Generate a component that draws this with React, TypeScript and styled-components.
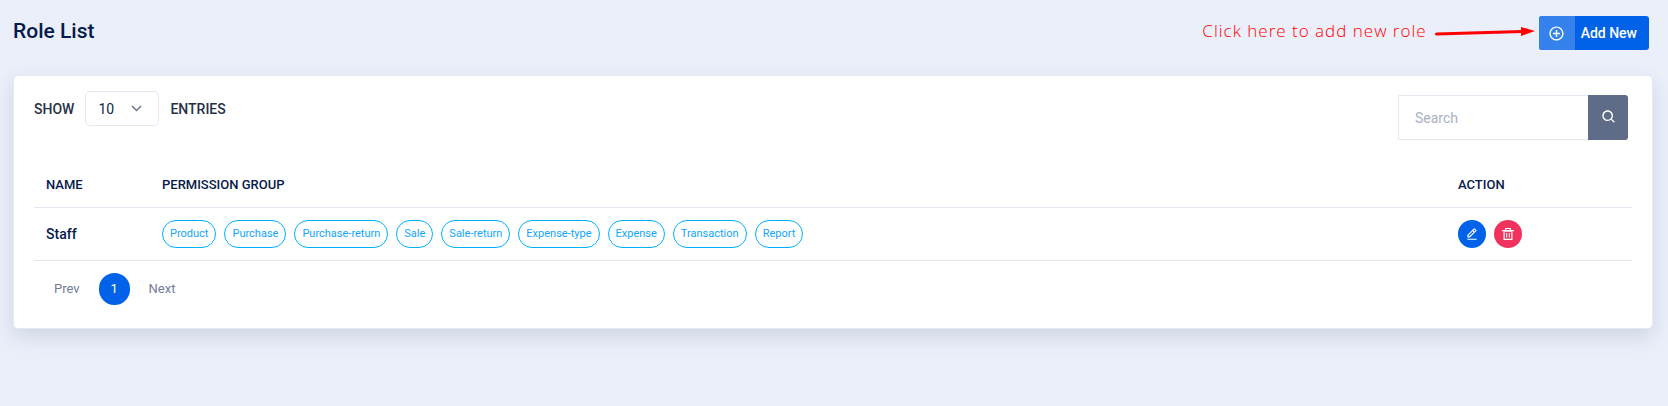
import React from 'react';
import styled, { createGlobalStyle } from 'styled-components';
import { BiPlusCircle, BiSearch, BiEditAlt } from 'react-icons/bi';

const GlobalStyle = createGlobalStyle`
  *, *::before, *::after { box-sizing: border-box; }
  body {
    margin: 0;
    background: #ebeffa;
    color: #061a4b;
    font-family: Roboto, "Liberation Sans", sans-serif;
    font-size: 14px;
    line-height: 20px;
  }
  button, input, select { font: inherit; }
`;

const Page = styled.main`
  padding: 16px 15px 60px 13px;
`;

const PageHeader = styled.header`
  display: flex;
  justify-content: space-between;
  align-items: center;
  height: 34px;
  margin-bottom: 25px;
  padding-right: 4px;
`;

const Title = styled.h1`
  margin: 0;
  padding-bottom: 4px;
  font-size: 21px;
  line-height: 30px;
  font-weight: 500;
`;

const HeaderActions = styled.div`
  display: flex;
  align-items: center;
`;

const Hint = styled.p`
  margin: 0;
  padding-bottom: 4px;
  color: #ff0000;
  font-family: "Open Sans", "Noto Sans", sans-serif;
  font-weight: 300;
  font-size: 17px;
  line-height: 30px;
  letter-spacing: 1px;
`;

const Arrow = styled.svg`
  display: block;
  margin: 0 4px 4px 7px;
`;

const AddButton = styled.button`
  display: flex;
  height: 34px;
  padding: 0;
  border: 0;
  border-radius: 3px;
  overflow: hidden;
  background: #0062e8;
  color: #fff;
  cursor: pointer;
`;

const AddIcon = styled.span`
  display: grid;
  place-items: center;
  width: 36px;
  height: 34px;
  background: #3582ed;
`;

const AddLabel = styled.span`
  padding: 0 12px 0 6px;
  line-height: 34px;
  font-weight: 500;
`;

const Card = styled.section`
  padding: 15px 20px 23px;
  border: 1px solid #e6e9f3;
  border-radius: 5px;
  background: #fff;
  box-shadow: 0 8px 20px rgba(40, 55, 90, 0.14);
`;

const Toolbar = styled.div`
  display: flex;
  justify-content: space-between;
  align-items: flex-start;
  padding-right: 4px;
`;

const LengthLabel = styled.label`
  display: flex;
  align-items: center;
  gap: 11px;
  color: #283046;
  font-weight: 500;
  text-transform: uppercase;
`;

const SelectBox = styled.span`
  display: grid;
  align-items: center;
  width: 74px;
  font-weight: 400;
  & > * { grid-area: 1 / 1; }
  & > svg { justify-self: end; margin-right: 17px; pointer-events: none; }
`;

const Select = styled.select`
  appearance: none;
  width: 100%;
  height: 35px;
  padding: 0 12px;
  border: 1px solid #e4e8f4;
  border-radius: 5px;
  background: #fff;
  color: #0f2450;
`;

const SearchForm = styled.form`
  display: flex;
  margin-top: 4px;
`;

const SearchInput = styled.input`
  width: 190px;
  height: 45px;
  padding: 0 16px;
  border: 1px solid #e6eaf4;
  border-right: 0;
  border-radius: 0;
  outline: 0;
  color: #061a4b;
  &::placeholder { color: #a9b1c4; opacity: 1; }
`;

const SearchButton = styled.button`
  display: grid;
  place-items: center;
  width: 40px;
  height: 45px;
  padding: 0 0 2px 2px;
  border: 0;
  border-radius: 0 3px 3px 0;
  background: #5f6c87;
  color: #fff;
  cursor: pointer;
`;

const Table = styled.table`
  width: 100%;
  margin-top: 20px;
  border-collapse: collapse;
  text-align: left;
`;

const Th = styled.th<{ $width?: string }>`
  width: ${(p) => p.$width ?? 'auto'};
  height: 47px;
  padding: 4px 12px 0;
  border-bottom: 1px solid #e4e7ef;
  font-size: 13px;
  font-weight: 500;
  text-transform: uppercase;
`;

const Td = styled.td`
  height: 53px;
  padding: 0 12px;
  border-bottom: 1px solid #e4e7ef;
  font-weight: 500;
`;

const Group = styled.div`
  display: flex;
  flex-wrap: wrap;
  gap: 8px;
`;

const Badge = styled.span`
  padding: 0 7px;
  border: 1px solid #00b1ff;
  border-radius: 14px;
  color: #0fa6ff;
  font-size: 11px;
  font-weight: 400;
  line-height: 26px;
`;

const RoundButton = styled.button<{ $color: string }>`
  display: grid;
  place-items: center;
  width: 28px;
  height: 28px;
  padding: 0;
  border: 0;
  border-radius: 50%;
  background: ${(p) => p.$color};
  color: #fff;
  cursor: pointer;
`;

const Pager = styled.nav`
  display: flex;
  align-items: center;
  margin-top: 12px;
  padding-left: 8px;
`;

const PageLink = styled.a<{ $current?: boolean }>`
  min-width: 31px;
  padding: 0 ${(p) => (p.$current ? 0 : 12)}px;
  margin: 0 ${(p) => (p.$current ? 7 : 0)}px;
  border-radius: 16px;
  background: ${(p) => (p.$current ? '#0062e8' : 'transparent')};
  color: ${(p) => (p.$current ? '#fff' : '#717c98')};
  font-size: 13px;
  line-height: 32px;
  text-align: center;
  text-decoration: none;
`;

const permissions = [
  'Product', 'Purchase', 'Purchase-return', 'Sale', 'Sale-return',
  'Expense-type', 'Expense', 'Transaction', 'Report',
];

export default function App() {
  return (
    <>
      <GlobalStyle />
      <Page>
        <PageHeader>
          <Title>Role List</Title>
          <HeaderActions>
            <Hint>Click here to add new role</Hint>
            <Arrow width="101" height="12" viewBox="0 0 101 12" aria-hidden="true">
              <path d="M2.500 9 88 6.500" stroke="#f00" strokeWidth="3" strokeLinecap="round" />
              <path d="M87 2 101 6 87 11Z" fill="#f00" />
            </Arrow>
            <AddButton type="button">
              <AddIcon><BiPlusCircle size={17} /></AddIcon>
              <AddLabel>Add New</AddLabel>
            </AddButton>
          </HeaderActions>
        </PageHeader>

        <Card>
          <Toolbar>
            <LengthLabel>
              Show
              <SelectBox>
                <Select defaultValue="10">
                  <option>10</option>
                  <option>25</option>
                  <option>50</option>
                </Select>
                <svg width="11" height="7" viewBox="0 0 11 7" aria-hidden="true">
                  <path d="M1 1l4.500 4.500L10 1" fill="none" stroke="#6b7488" strokeWidth="1.500" />
                </svg>
              </SelectBox>
              Entries
            </LengthLabel>
            <SearchForm role="search" onSubmit={(e) => e.preventDefault()}>
              <SearchInput type="text" placeholder="Search" aria-label="Search" />
              <SearchButton type="submit" aria-label="Search"><BiSearch size={16} /></SearchButton>
            </SearchForm>
          </Toolbar>

          <Table>
            <thead>
              <tr>
                <Th $width="116px">Name</Th>
                <Th>Permission Group</Th>
                <Th $width="186px">Action</Th>
              </tr>
            </thead>
            <tbody>
              <tr>
                <Td>Staff</Td>
                <Td><Group>{permissions.map((p) => <Badge key={p}>{p}</Badge>)}</Group></Td>
                <Td>
                  <Group>
                    <RoundButton type="button" $color="#0062e8" aria-label="Edit">
                      <BiEditAlt size={14} />
                    </RoundButton>
                    <RoundButton type="button" $color="#f1325d" aria-label="Delete">
                      <svg width="12" height="12" viewBox="0 0 12 12" fill="#fff" aria-hidden="true">
                        <path d="M3 0h6v2h3v1.200H0V2h3zM4.200 1v1h3.600V1zM1.500 3h9v9h-9zM2.700 4v6.800h6.600V4z" fillRule="evenodd" />
                        <path d="M4.200 5h1v4.500h-1zM6.800 5h1v4.500h-1z" />
                      </svg>
                    </RoundButton>
                  </Group>
                </Td>
              </tr>
            </tbody>
          </Table>

          <Pager aria-label="Pages">
            <PageLink href="#prev">Prev</PageLink>
            <PageLink href="#1" $current aria-current="page">1</PageLink>
            <PageLink href="#next">Next</PageLink>
          </Pager>
        </Card>
      </Page>
    </>
  );
}
